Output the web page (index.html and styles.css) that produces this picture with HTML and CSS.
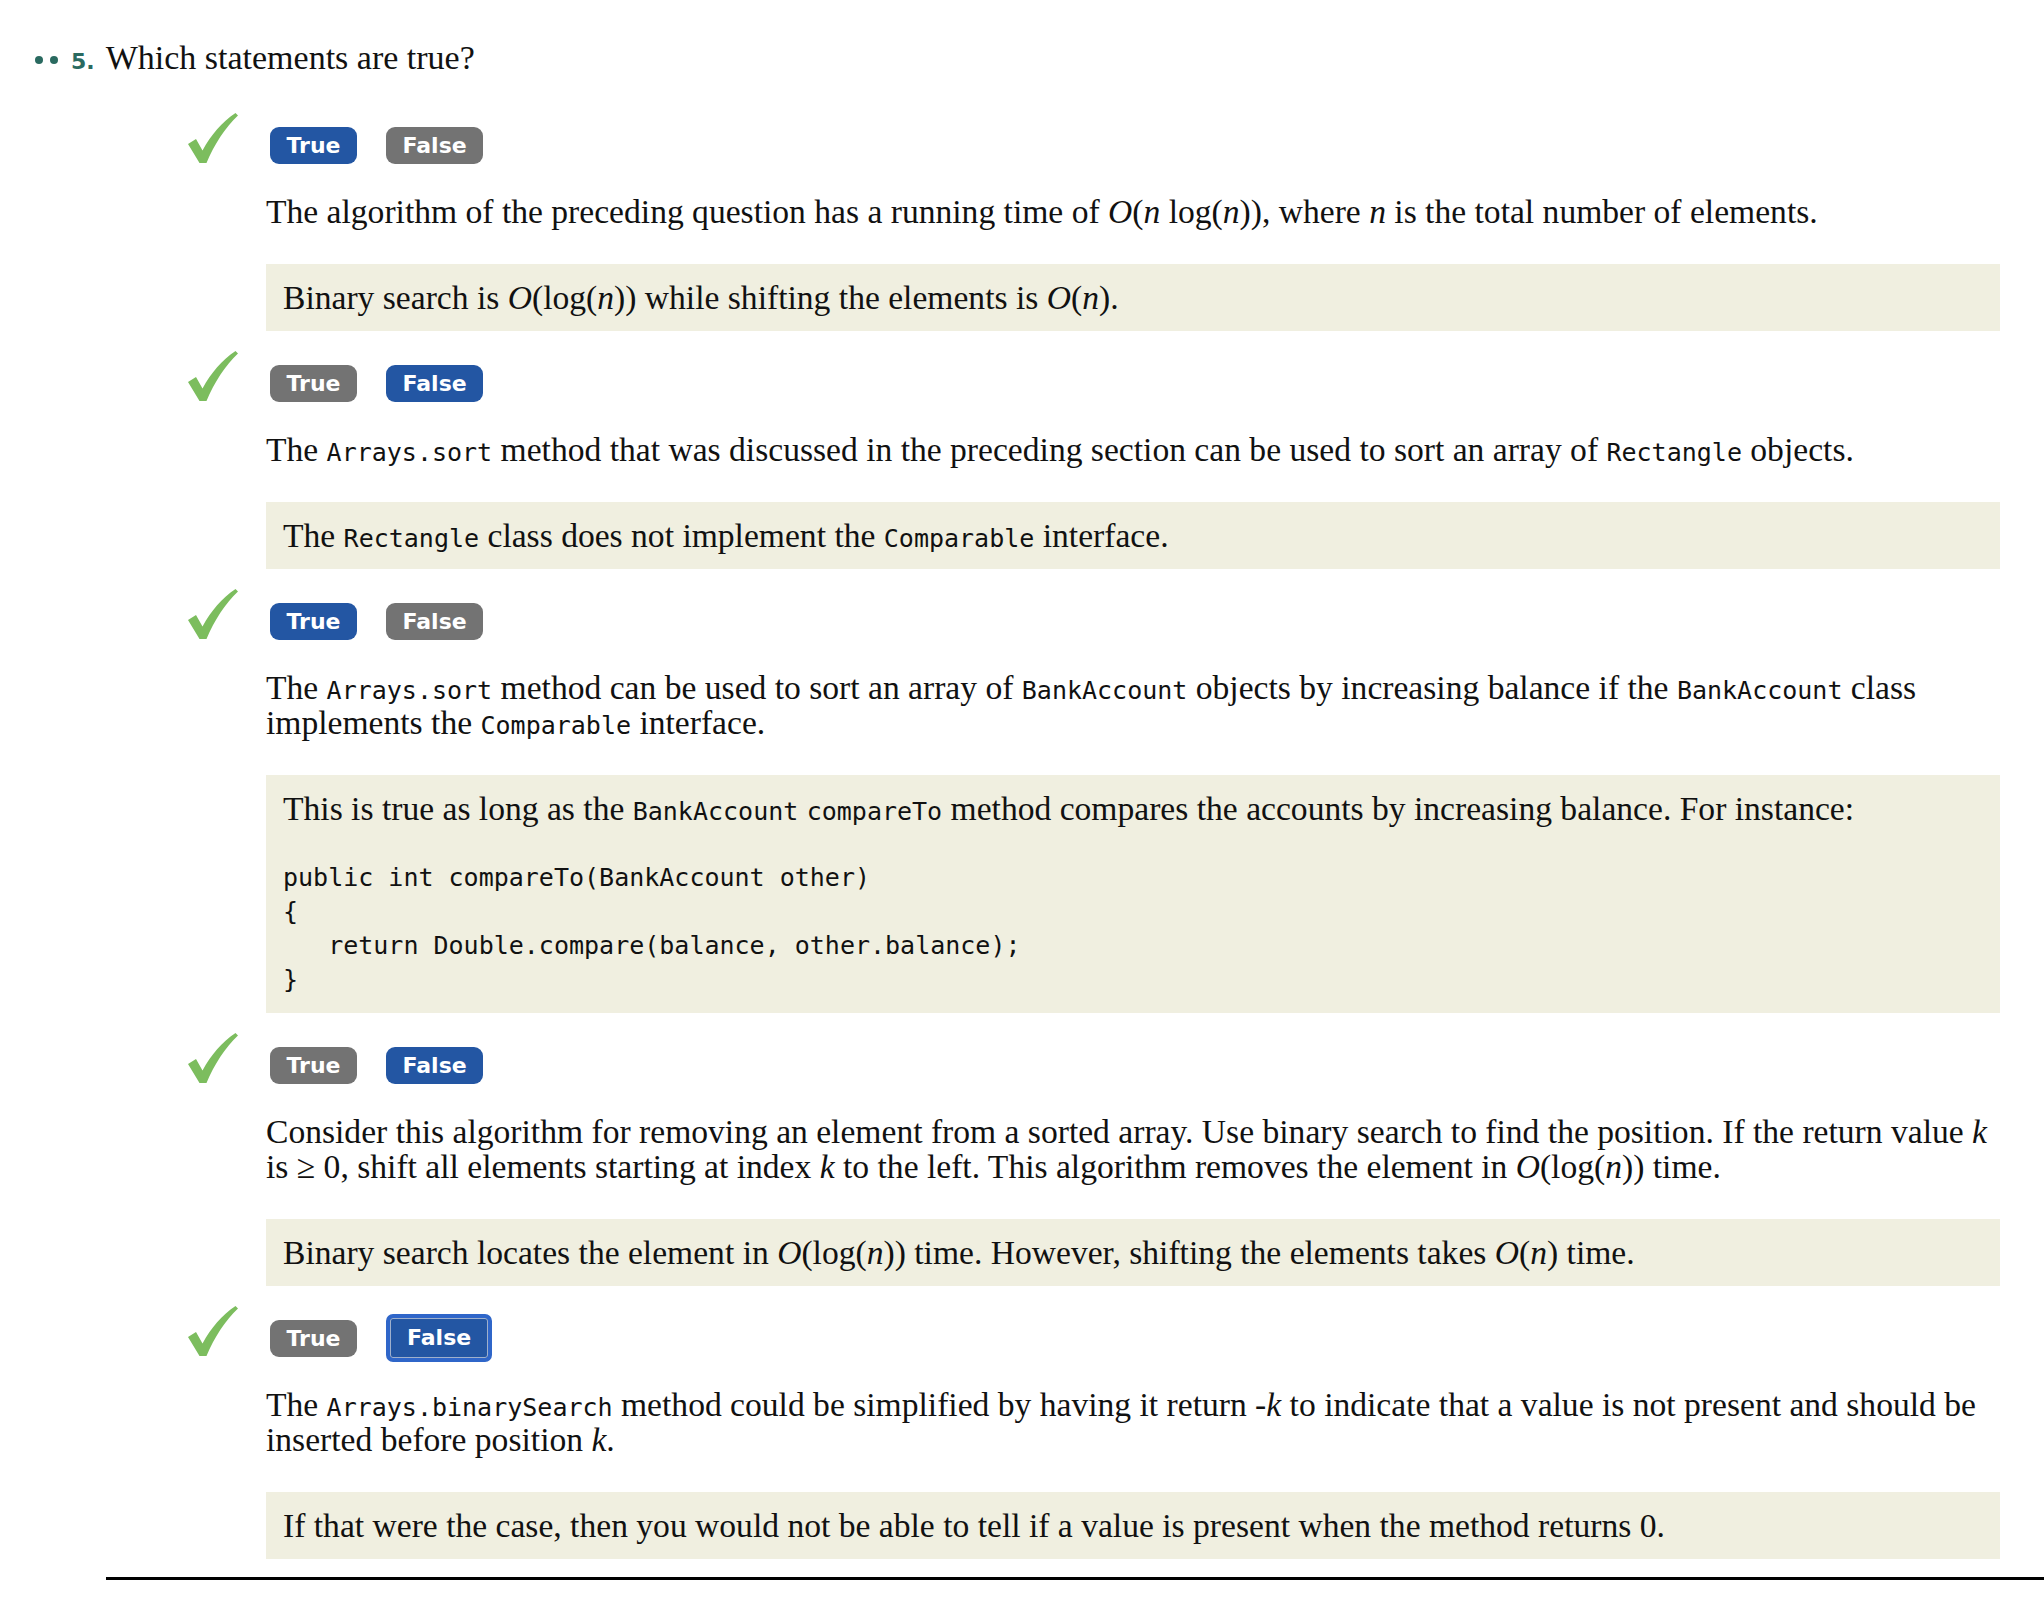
FILE: index.html
```html
<!DOCTYPE html>
<html>
<head>
<meta charset="utf-8">
<link rel="stylesheet" href="styles.css">
</head>
<body>
<div class="question">
  <h2 class="q-title"><span class="dots"><span class="dot"></span><span class="dot"></span></span><span class="num">5.</span><span class="q-text">Which statements are true?</span></h2>
  <ol class="items">
    <li class="item">
      <div class="answer-row">
        <span class="check"><svg viewBox="0 0 50 50" width="50" height="50"><path d="M0 31 L8 26 L14.5 37.5 C23 22 34 9 47.5 0 L50 2.5 C37 15 26.5 31 18.5 50 L11.5 50 Z" fill="#7cbd5e"/></svg></span>
        <button class="btn on">True</button><button class="btn">False</button>
      </div>
      <p class="stmt">The algorithm of the preceding question has a running time of <i>O</i>(<i>n</i> log(<i>n</i>)), where <i>n</i> is the total number of elements.</p>
      <div class="feedback">Binary search is <i>O</i>(log(<i>n</i>)) while shifting the elements is <i>O</i>(<i>n</i>).</div>
    </li>
    <li class="item">
      <div class="answer-row">
        <span class="check"><svg viewBox="0 0 50 50" width="50" height="50"><path d="M0 31 L8 26 L14.5 37.5 C23 22 34 9 47.5 0 L50 2.5 C37 15 26.5 31 18.5 50 L11.5 50 Z" fill="#7cbd5e"/></svg></span>
        <button class="btn">True</button><button class="btn on">False</button>
      </div>
      <p class="stmt">The <code>Arrays.sort</code> method that was discussed in the preceding section can be used to sort an array of <code>Rectangle</code> objects.</p>
      <div class="feedback">The <code>Rectangle</code> class does not implement the <code>Comparable</code> interface.</div>
    </li>
    <li class="item">
      <div class="answer-row">
        <span class="check"><svg viewBox="0 0 50 50" width="50" height="50"><path d="M0 31 L8 26 L14.5 37.5 C23 22 34 9 47.5 0 L50 2.5 C37 15 26.5 31 18.5 50 L11.5 50 Z" fill="#7cbd5e"/></svg></span>
        <button class="btn on">True</button><button class="btn">False</button>
      </div>
      <p class="stmt">The <code>Arrays.sort</code> method can be used to sort an array of <code>BankAccount</code> objects by increasing balance if the <code>BankAccount</code> class implements the <code>Comparable</code> interface.</p>
      <div class="feedback">This is true as long as the <code>BankAccount</code> <code>compareTo</code> method compares the accounts by increasing balance. For instance:
<pre class="code">public int compareTo(BankAccount other)
{
   return Double.compare(balance, other.balance);
}</pre></div>
    </li>
    <li class="item">
      <div class="answer-row">
        <span class="check"><svg viewBox="0 0 50 50" width="50" height="50"><path d="M0 31 L8 26 L14.5 37.5 C23 22 34 9 47.5 0 L50 2.5 C37 15 26.5 31 18.5 50 L11.5 50 Z" fill="#7cbd5e"/></svg></span>
        <button class="btn">True</button><button class="btn on">False</button>
      </div>
      <p class="stmt">Consider this algorithm for removing an element from a sorted array. Use binary search to find the position. If the return value <i>k</i> is ≥ 0, shift all elements starting at index <i>k</i> to the left. This algorithm removes the element in <i>O</i>(log(<i>n</i>)) time.</p>
      <div class="feedback">Binary search locates the element in <i>O</i>(log(<i>n</i>)) time. However, shifting the elements takes <i>O</i>(<i>n</i>) time.</div>
    </li>
    <li class="item">
      <div class="answer-row">
        <span class="check"><svg viewBox="0 0 50 50" width="50" height="50"><path d="M0 31 L8 26 L14.5 37.5 C23 22 34 9 47.5 0 L50 2.5 C37 15 26.5 31 18.5 50 L11.5 50 Z" fill="#7cbd5e"/></svg></span>
        <button class="btn">True</button><button class="btn on focus">False</button>
      </div>
      <p class="stmt">The <code>Arrays.binarySearch</code> method could be simplified by having it return -<i>k</i> to indicate that a value is not present and should be inserted before position <i>k</i>.</p>
      <div class="feedback">If that were the case, then you would not be able to tell if a value is present when the method returns 0.</div>
    </li>
  </ol>
  <hr class="rule">
</div>
</body>
</html>
```

FILE: styles.css
```css
html, body {
  margin: 0;
  padding: 0;
  background: #ffffff;
}

body {
  font-family: "Liberation Serif", "Times New Roman", serif;
  color: #111;
  font-size: 33.6px;
  line-height: 35px;
}

.question {
  padding-top: 38px;
}

.q-title {
  margin: 0;
  display: flex;
  align-items: baseline;
  padding-left: 35px;
  font-weight: normal;
  font-size: 34px;
  line-height: 40px;
}

.dots {
  display: inline-flex;
  gap: 7px;
  margin-right: 13px;
  align-self: center;
}

.dot {
  width: 8px;
  height: 8px;
  border-radius: 50%;
  background: #2a6a60;
}

.num {
  font-family: "DejaVu Sans", sans-serif;
  font-weight: bold;
  font-size: 22px;
  color: #2a6a60;
  margin-right: 11px;
}

.items {
  list-style: none;
  margin: 0;
  padding: 0 44px 0 266px;
}

.item {
  padding-top: 20px;
}

.item:first-child {
  padding-top: 31px;
}

.answer-row {
  display: flex;
  align-items: flex-end;
  margin-left: -78px;
}

.check {
  width: 50px;
  height: 50px;
  margin-right: 32px;
  margin-bottom: 1px;
}

.check svg {
  display: block;
}

.btn {
  font-family: "DejaVu Sans", sans-serif;
  font-weight: bold;
  font-size: 22px;
  line-height: 37px;
  height: 37px;
  padding: 0 16.5px;
  border: none;
  border-radius: 9px;
  color: #fff;
  background: #737373;
  margin-right: 29px;
  box-sizing: border-box;
}

.btn.on {
  background: #2356a3;
}

.btn.focus {
  height: 48px;
  padding: 0 17px;
  border: 4px solid #2f66c9;
  box-shadow: inset 0 0 0 1px #9fb0cc;
  border-radius: 7px;
  line-height: 40px;
  margin-bottom: -5px;
}

.stmt {
  margin: 30px 0 0 0;
}

.feedback {
  margin-top: 35px;
  background: #f0efe0;
  padding: 16px 17px;
}

code, .code {
  font-family: "DejaVu Sans Mono", "Liberation Mono", monospace;
  font-size: 25px;
}

code {
  line-height: 20px;
}

.code {
  margin: 35px 0 0 0;
  line-height: 34px;
  white-space: pre;
}

.rule {
  margin: 18px 0 0 106px;
  border: none;
  border-top: 3px solid #000;
  height: 0;
}
```
